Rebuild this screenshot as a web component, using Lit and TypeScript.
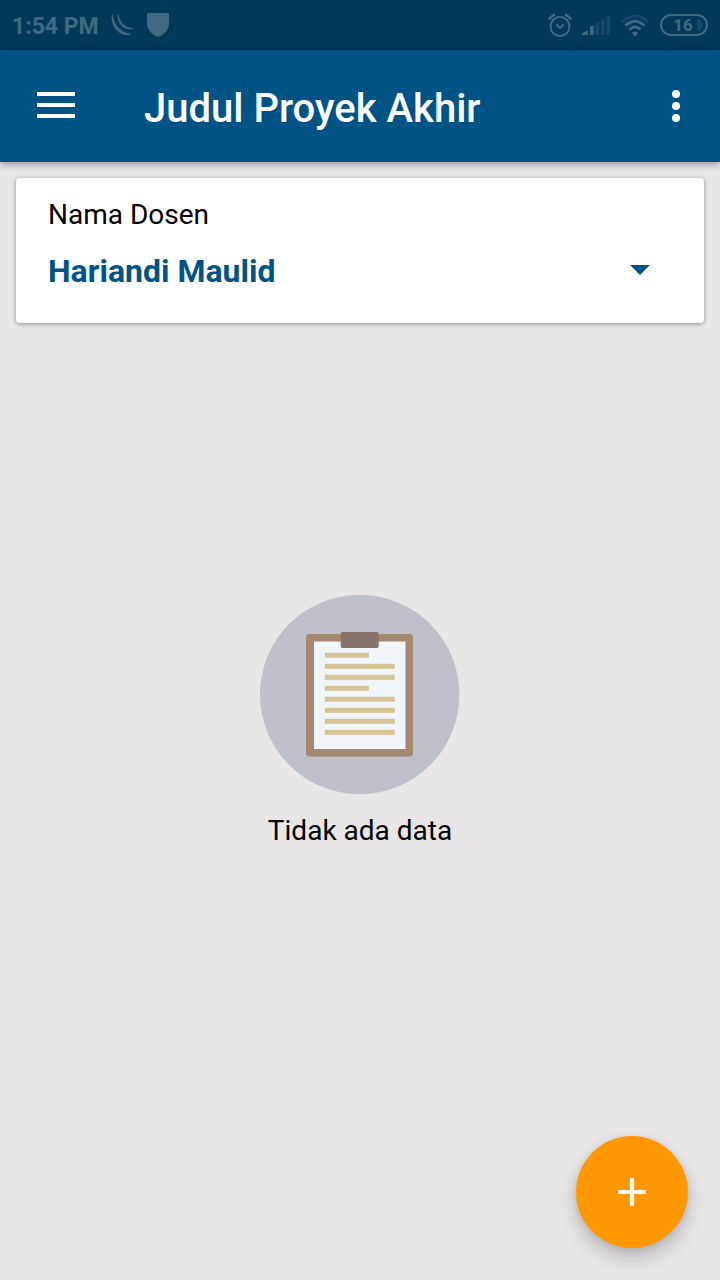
import { LitElement, html, css, svg } from "lit";
import { customElement, property, state } from "lit/decorators.js";

@customElement("status-bar")
class StatusBar extends LitElement {
  @property() time = "";
  @property({ type: Number }) battery = 0;

  static styles = css`
    :host {
      display: flex;
      align-items: center;
      justify-content: space-between;
      height: 50px;
      padding: 0 12px;
      box-sizing: border-box;
      background: #003a58;
      color: #3f6a82;
      fill: currentColor;
    }
    .group {
      display: flex;
      align-items: center;
    }
    .left {
      gap: 12px;
    }
    .right {
      gap: 10px;
    }
    .time {
      padding-top: 4px;
      font-size: 23px;
      line-height: 32px;
      font-weight: 700;
    }
    svg {
      display: block;
    }
    .battery {
      display: flex;
      align-items: center;
      justify-content: center;
      box-sizing: border-box;
      position: relative;
      width: 48px;
      height: 22px;
      border: 2px solid currentColor;
      border-radius: 11px;
      padding-right: 2px;
      font-size: 17px;
      line-height: 18px;
      font-weight: 700;
    }
    .cap {
      position: absolute;
      right: 3px;
      top: 3px;
      width: 6px;
      height: 12px;
      border-radius: 0 6px 6px 0;
      background: #14496a;
    }
  `;

  render() {
    return html`
      <div class="group left">
        <span class="time">${this.time}</span>
        <svg width="24" height="28" viewBox="0 0 24 28" aria-hidden="true">
          <path d="M0.800 4C-0.500 14 6 25 18 24L20.500 22.500C11 22.500 3.500 15 1.800 4Z" />
          <path d="M6.500 3C5.500 11 12 20 22 18L22.500 17C14.500 17.500 9 12 7.200 3Z" />
        </svg>
        <svg width="22" height="28" viewBox="0 0 22 28" aria-hidden="true">
          <path d="M1 2H21Q22 2 22 3V12C22 19 17 24 11 26C5 24 0 19 0 12V3Q0 2 1 2Z" />
        </svg>
      </div>
      <div class="group right">
        <svg width="24" height="24" viewBox="0 0 24 24" aria-hidden="true">
          <g fill="none" stroke="currentColor" stroke-width="2">
            <circle cx="12" cy="13.500" r="9.500" />
            <path d="M8 11.500L12 15L16 11.500" />
          </g>
          <path
            fill="none"
            stroke="currentColor"
            stroke-width="2.500"
            d="M1 6.500Q3 3 7 1.500M17 1.500Q21 3 23 6.500"
          />
        </svg>
        <svg width="28" height="22" viewBox="0 0 28 22" aria-hidden="true">
          <path d="M0 21V19.500L6 16V21ZM8 21V13L11.500 11V21Z" />
          <path
            fill="#14496a"
            d="M13.500 21V9.500L17 7.500V21ZM19 21V6.500L22.500 4.500V21ZM24.500 21V3L28 1V21Z"
          />
        </svg>
        <svg width="30" height="24" viewBox="0 0 30 24" aria-hidden="true">
          <g fill="none" stroke="currentColor" stroke-width="3">
            <path stroke="#14496a" d="M2 9Q15-3 28 9" />
            <path d="M5.500 12.500Q15 4 24.500 12.500" />
            <path d="M9.500 16.500Q15 11.500 20.500 16.500" />
          </g>
          <path d="M12 19.500Q15 17.500 18 19.500Q17 22.500 15 23.500Q13 22.500 12 19.500Z" />
        </svg>
        <div class="battery">${this.battery}<span class="cap"></span></div>
      </div>
    `;
  }
}

@customElement("app-bar")
class AppBar extends LitElement {
  @property() heading = "";

  static styles = css`
    :host {
      display: flex;
      align-items: center;
      height: 112px;
      padding: 0 16px 0 0;
      box-sizing: border-box;
      background: #005485;
      color: #fff;
      box-shadow: 0 2px 8px rgba(0, 0, 0, 0.4);
    }
    h1 {
      flex: 1;
      margin: 0;
      padding: 6px 0 0 32px;
      font-size: 40px;
      line-height: 48px;
      font-weight: 500;
    }
    button {
      display: flex;
      align-items: center;
      justify-content: center;
      height: 112px;
      padding: 0;
      border: 0;
      background: none;
      color: inherit;
    }
    .menu {
      width: 112px;
    }
    .more {
      width: 56px;
    }
    svg {
      fill: currentColor;
    }
  `;

  render() {
    return html`
      <button class="menu" aria-label="Menu">
        <svg width="38" height="28" viewBox="0 0 38 28">
          <path d="M0 0H38V4H0ZM0 11H38V15H0ZM0 22H38V26H0Z" />
        </svg>
      </button>
      <h1>${this.heading}</h1>
      <button class="more" aria-label="Opsi lainnya">
        <svg width="8" height="32" viewBox="0 0 8 32">
          <circle cx="4" cy="4" r="4" />
          <circle cx="4" cy="16" r="4" />
          <circle cx="4" cy="28" r="4" />
        </svg>
      </button>
    `;
  }
}

@customElement("lecturer-card")
class LecturerCard extends LitElement {
  @property({ type: Array }) names: string[] = [];
  @state() private selected = 0;

  static styles = css`
    :host {
      display: block;
      padding: 16px 32px;
      background: #fff;
      border-radius: 4px;
      box-shadow: 0 1px 4px rgba(0, 0, 0, 0.4);
    }
    label {
      display: block;
      font-size: 28px;
      line-height: 41px;
      color: #000;
    }
    .field {
      display: grid;
      align-items: center;
    }
    select,
    .caret {
      grid-area: 1 / 1;
    }
    select {
      appearance: none;
      width: 100%;
      height: 72px;
      margin: 0;
      padding: 0 48px 0 0;
      border: 0;
      background: none;
      font-family: inherit;
      font-size: 32px;
      font-weight: 700;
      color: #005485;
    }
    .caret {
      justify-self: end;
      margin-right: 22px;
      fill: #005485;
      pointer-events: none;
    }
  `;

  render() {
    return html`
      <label for="lecturer">Nama Dosen</label>
      <div class="field">
        <select
          id="lecturer"
          @change=${(e: Event) => (this.selected = (e.target as HTMLSelectElement).selectedIndex)}
        >
          ${this.names.map((n, i) => html`<option ?selected=${i === this.selected}>${n}</option>`)}
        </select>
        <svg class="caret" width="20" height="12" viewBox="0 0 20 12" aria-hidden="true">
          <path d="M0 0H20L10 10Z" />
        </svg>
      </div>
    `;
  }
}

@customElement("empty-state")
class EmptyState extends LitElement {
  @property() message = "";

  static styles = css`
    :host {
      display: flex;
      flex-direction: column;
      align-items: center;
      gap: 20px;
    }
    p {
      margin: 0;
      font-size: 28px;
      line-height: 32px;
      color: #000;
    }
  `;

  private lines = [44, 70, 70, 44, 70, 70, 70, 70];

  render() {
    return html`
      <svg width="200" height="200" viewBox="0 0 200 200" aria-hidden="true">
        <circle cx="99.700" cy="99.500" r="99.700" fill="#bec1c9" />
        <rect x="46" y="39" width="107" height="122.500" rx="3.500" fill="#a58872" />
        <rect x="54" y="46.500" width="91.500" height="107.500" fill="#eff5f8" />
        <rect x="80.700" y="37" width="38" height="16" rx="2" fill="#85736c" />
        ${this.lines.map(
          (w, i) => svg`<rect x="64.800" y=${57.8 + i * 11} width=${w} height="5" fill="#d6c496" />`
        )}
      </svg>
      <p>${this.message}</p>
    `;
  }
}

@customElement("app-root")
class AppRoot extends LitElement {
  static styles = css`
    :host {
      display: flex;
      flex-direction: column;
      min-height: 100vh;
      background: #e8e6e7;
      font-family: Roboto, sans-serif;
    }
    app-bar {
      z-index: 1;
    }
    main {
      flex: 1;
      display: grid;
    }
    lecturer-card,
    empty-state {
      grid-area: 1 / 1;
    }
    lecturer-card {
      align-self: start;
      margin: 16px;
    }
    empty-state {
      place-self: center;
    }
    .add {
      position: fixed;
      right: 32px;
      bottom: 32px;
      display: flex;
      align-items: center;
      justify-content: center;
      width: 112px;
      height: 112px;
      padding: 0;
      border: 0;
      border-radius: 50%;
      background: #ff9800;
      box-shadow: 0 10px 20px rgba(0, 0, 0, 0.2), 0 2px 8px rgba(0, 0, 0, 0.1);
    }
  `;

  render() {
    return html`
      <status-bar time="1:54 PM" battery="16"></status-bar>
      <app-bar heading="Judul Proyek Akhir"></app-bar>
      <main>
        <lecturer-card .names=${["Hariandi Maulid"]}></lecturer-card>
        <empty-state message="Tidak ada data"></empty-state>
      </main>
      <button class="add" aria-label="Tambah">
        <svg width="28" height="28" viewBox="0 0 28 28" fill="#fff">
          <path d="M12 0H16V12H28V16H16V28H12V16H0V12H12Z" />
        </svg>
      </button>
    `;
  }
}
